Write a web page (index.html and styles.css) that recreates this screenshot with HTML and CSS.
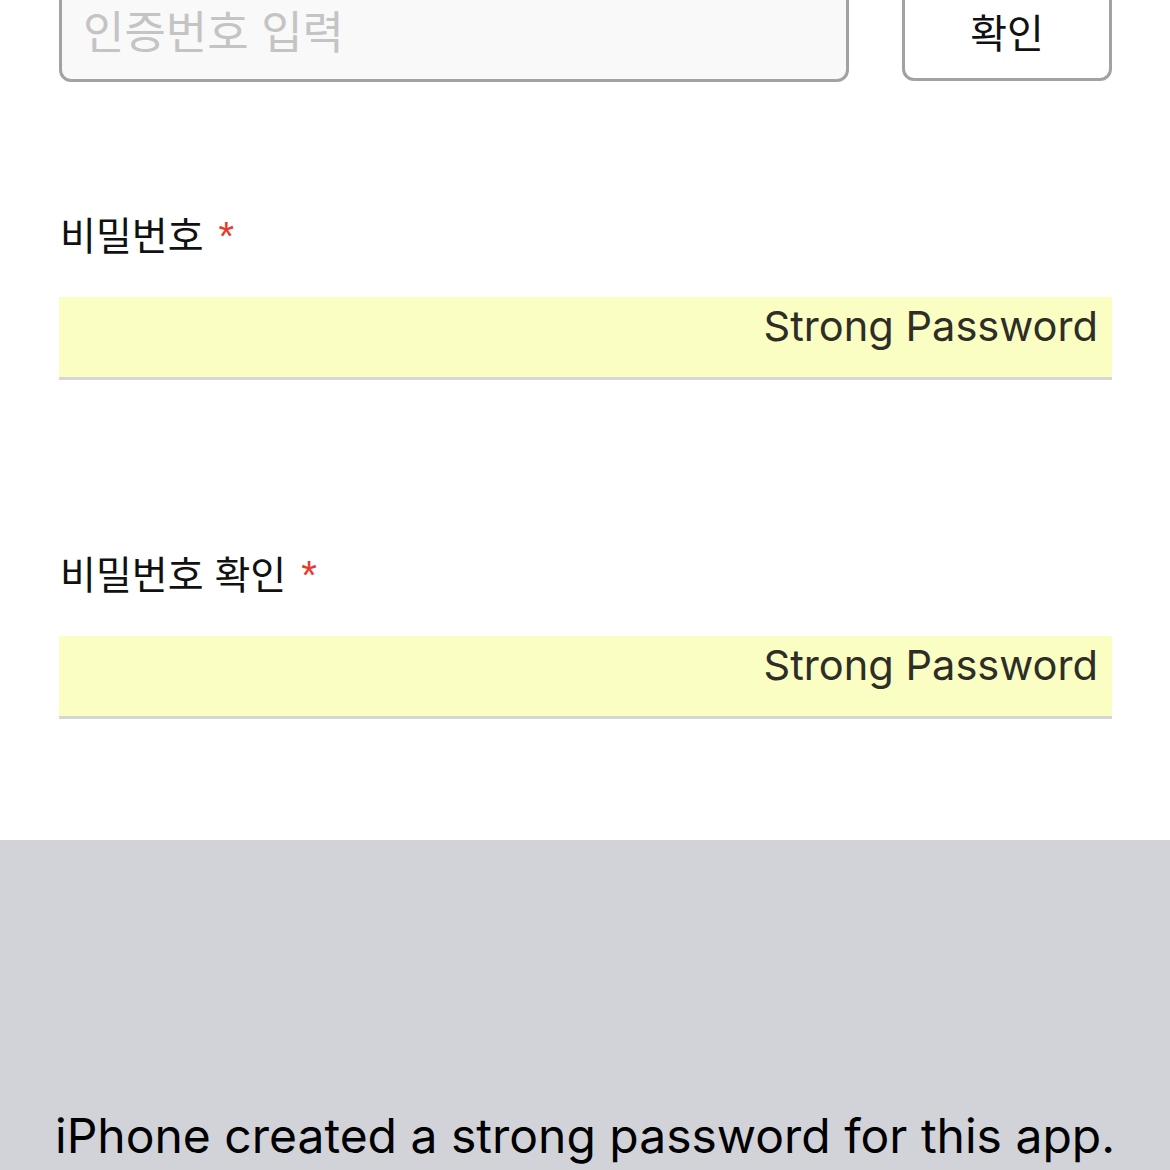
FILE: index.html
```html
<!DOCTYPE html>
<html lang="ko">
<head>
<meta charset="utf-8">
<link rel="stylesheet" href="styles.css">
</head>
<body>
<div class="form">
  <div class="verify-row">
    <div class="code-input">인증번호 입력</div>
    <button class="confirm-btn">확인</button>
  </div>
  <div class="field-group first">
    <div class="label">비밀번호 <span class="req">*</span></div>
    <div class="pw-field"><span class="pw-text">Strong Password</span></div>
  </div>
  <div class="field-group second">
    <div class="label">비밀번호 확인 <span class="req">*</span></div>
    <div class="pw-field"><span class="pw-text">Strong Password</span></div>
  </div>
</div>
<div class="keyboard-panel">
  <p class="panel-text">iPhone created a strong password for this app.</p>
</div>
</body>
</html>
```

FILE: styles.css
```css
html, body {
  margin: 0;
  padding: 0;
  background: #ffffff;
  width: 1170px;
  height: 1170px;
  overflow: hidden;
}
.form {
  display: flow-root;
  padding: 0 58px 0 59px;
  height: 840px;
  box-sizing: border-box;
  font-family: "Noto Sans CJK KR", "Noto Sans", sans-serif;
}
.verify-row {
  display: flex;
  gap: 53px;
  margin-top: -20px;
}
.code-input {
  width: 791px;
  height: 102px;
  box-sizing: border-box;
  border: 3px solid #a2a2a2;
  border-radius: 12px;
  background: #f9f9f9;
  color: #c4c4c4;
  font-size: 45px;
  line-height: 1;
  padding: 24px 0 0 21px;
}
.confirm-btn {
  width: 210px;
  height: 101px;
  box-sizing: border-box;
  border: 3px solid #a2a2a2;
  border-radius: 12px;
  background: #ffffff;
  color: #111111;
  font-family: "Noto Sans CJK KR", sans-serif;
  font-size: 40px;
  line-height: 1;
  padding: 0;
}
.field-group.first {
  margin-top: 132px;
}
.field-group.second {
  margin-top: 173px;
}
.label {
  font-size: 39px;
  line-height: 1;
  color: #111111;
  height: 44px;
  margin-left: 1px;
}
.req {
  color: #e8392c;
  font-family: "Liberation Sans", sans-serif;
  font-size: 40px;
  margin-left: 4px;
}
.pw-field {
  margin-top: 39px;
  height: 80px;
  box-sizing: content-box;
  background: #fafec2;
  border-bottom: 3px solid #d6d6d6;
  display: flex;
  justify-content: flex-end;
  align-items: flex-start;
  padding-right: 14px;
}
.pw-text {
  font-family: Inter, "Noto Sans", sans-serif;
  font-size: 41.6px;
  line-height: 1;
  color: #2e2e26;
  padding-top: 9px;
}
.keyboard-panel {
  background: #d1d3d8;
  height: 330px;
  box-sizing: border-box;
  padding-top: 272px;
}
.panel-text {
  margin: 0 0 0 55px;
  font-family: Inter, "Noto Sans", sans-serif;
  font-size: 48px;
  line-height: 1;
  color: #000000;
  white-space: nowrap;
}
```
